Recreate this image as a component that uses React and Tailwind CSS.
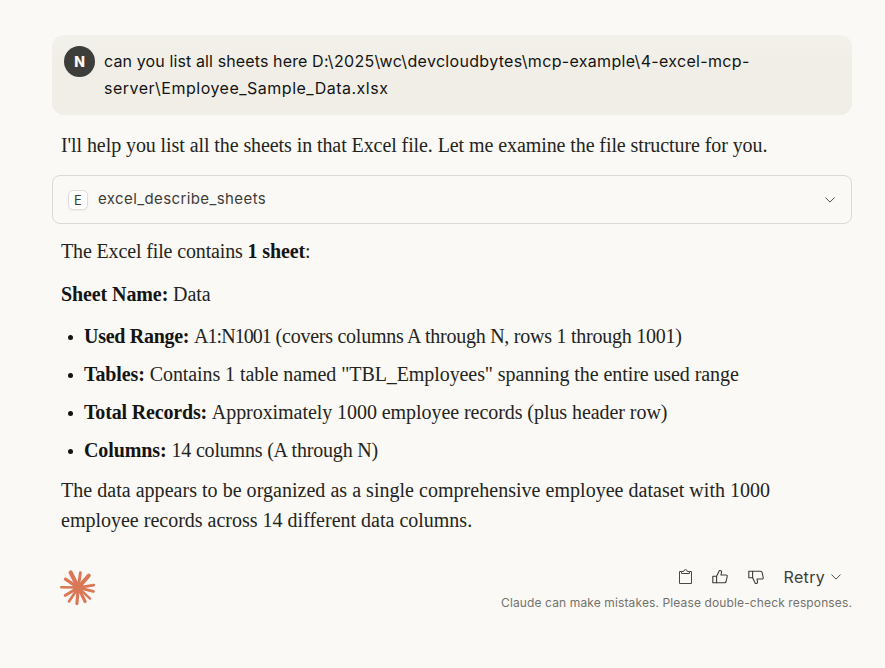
import React from "react";

const rays = [
  [-82, 16.5, 2.9], [-49, 18, 4], [-9, 17, 2.8], [14, 17, 3], [43, 17.3, 2.5],
  [64, 17, 3.1], [95, 17.6, 3.1], [124, 18, 2.7], [149, 16.8, 2.9], [181, 18.3, 2.5],
  [213, 17, 3.3], [243, 19, 4.2],
];

function Starburst() {
  return (
    <svg className="size-[38px]" viewBox="-19.3 -19.6 38 38" stroke="#d97757" strokeLinecap="round">
      {rays.map(([a, r, w]) => (
        <line
          key={a}
          x1="0"
          y1="0"
          x2={(r - w / 2) * Math.cos((a * Math.PI) / 180)}
          y2={(r - w / 2) * Math.sin((a * Math.PI) / 180)}
          strokeWidth={w}
        />
      ))}
      <circle r="5.2" fill="#d97757" stroke="none" />
    </svg>
  );
}

function Chevron() {
  return (
    <svg className="h-[6px] w-[10px] shrink-0" viewBox="0 0 10 6" fill="none" stroke="#4f4e4a" strokeLinecap="round" strokeLinejoin="round">
      <path d="M0.7 0.8 5 5.1 9.3 0.8" />
    </svg>
  );
}

function Clipboard() {
  return (
    <svg className="size-4" viewBox="0 0 16 16" fill="none" stroke="#4a4945" strokeLinejoin="round">
      <path d="M4.5 2.5h-2v12h12v-12h-2" />
      <path d="M4.5 4.5v-2h2.2a1.8 1.8 0 0 1 3.6 0h2.2v2z" />
    </svg>
  );
}

function Thumb({ className }) {
  return (
    <svg className={className} viewBox="0 0 16 16" fill="none" stroke="#3d3d3a" strokeWidth="1.1" strokeLinejoin="round">
      <path d="M.8 7.3h3.8v6.4H.8z" />
      <path d="M4.6 7.3 7.4 1.5c1.6-.3 2.4.8 2.1 2.2L9 6h5c.9 0 1.4.7 1.2 1.5l-1.1 5c-.2.8-.7 1.2-1.4 1.2H4.6" />
    </svg>
  );
}

function Item({ label, labelClass, className, children }) {
  return (
    <li className="flex h-[38px] items-center">
      <span className="mt-[3px] mr-[11px] ml-[7px] size-[5px] rounded-full bg-[#141413]" />
      <p className="whitespace-pre">
        <span className={labelClass}><b className="text-[#141413]">{label}</b> </span>
        <span className={className}>{children}</span>
      </p>
    </li>
  );
}

export default function App() {
  return (
    <main className="h-[668px] w-[885px] overflow-hidden bg-[#faf9f5] pt-[35px] pl-[52px] font-['Liberation_Serif',serif] text-[20px] leading-[30px] text-[#242421]">
      <div className="w-[800px]">
        <section className="flex h-20 gap-[9px] rounded-xl bg-linear-to-b from-[#f3f1eb] to-[#f0eee6] to-40% pt-[11px] pl-3 font-['Inter',sans-serif] text-[16px] leading-[27px] text-[#141413]">
          <div className="flex size-[31px] items-center justify-center rounded-full bg-[#3d3d3a] text-[14px] font-extrabold text-[#faf9f5]">N</div>
          <p className="pt-[2px] whitespace-pre">
            <span className="block tracking-[0.32px]"><span className="tracking-[0.12px]">can you list all sheets here </span>D:\2025\wc\devcloudbytes\mcp-example\4-excel-mcp-</span>
            <span className="block tracking-[0.5px]">server\Employee_Sample_Data.xlsx</span>
          </p>
        </section>

        <p className="mt-[15px] pl-[9px] tracking-[-0.085px] whitespace-pre">I'll help you list all the sheets in that Excel file. Let me examine the file structure for you.</p>

        <section className="mt-[15px] flex h-[49px] items-center rounded-lg border border-[#dad9d4] pr-4 pl-[15px] font-['Inter',sans-serif] text-[15px] text-[#3d3d3a]">
          <span className="flex size-5 items-center justify-center rounded-[5px] border border-[#dfdeda] bg-white pt-[2px] text-[13px] leading-none shadow-xs">E</span>
          <span className="mb-[2px] ml-[10px] flex-1 tracking-[0.4px]">excel_describe_sheets</span>
          <Chevron />
        </section>

        <div className="mt-[12px] pl-[9px]">
          <p className="tracking-[-0.14px]">The Excel file contains <b className="text-[#141413]">1 sheet</b>:</p>
          <p className="mt-[13px] tracking-[-0.1px]"><b className="text-[#141413]">Sheet Name:</b> Data</p>
          <ul className="mt-[8px]">
            <Item label="Used Range:" labelClass="tracking-[-0.28px]" className="tracking-[-0.25px]">
              <span className="tracking-[-0.95px]">A1:N1001</span> (covers columns A through N, rows 1 through 1001)
            </Item>
            <Item label="Tables:" labelClass="tracking-[-0.1px]" className="tracking-[-0.08px]">Contains 1 table named "TBL_Employees" spanning the entire used range</Item>
            <Item label="Total Records:" labelClass="tracking-[-0.17px]" className="tracking-[-0.06px]">Approximately 1000 employee records (plus header row)</Item>
            <Item label="Columns:" labelClass="tracking-[-0.1px]" className="tracking-[-0.19px]">14 columns (A through N)</Item>
          </ul>
          <p className="mt-[6px] whitespace-pre">
            <span className="block tracking-[0.03px]">The data appears to be organized as a single comprehensive employee dataset with 1000</span>
            <span className="block">employee records across 14 different data columns.</span>
          </p>
        </div>

        <footer className="mt-[33px] flex justify-between pl-[7px] font-['Inter',sans-serif]">
          <Starburst />
          <div className="-mt-[3px] flex flex-col items-end">
            <div className="flex h-6 items-center pr-[11px] text-[16px] text-[#3d3d3a]">
              <Clipboard />
              <Thumb className="ml-[19px] size-4" />
              <Thumb className="ml-[20px] size-4 -scale-y-100" />
              <span className="mr-[6px] ml-[20px] tracking-[0.3px]">Retry</span>
              <Chevron />
            </div>
            <p className="mt-[5px] text-[12px] leading-[18px] tracking-[0.125px] text-[#73726c]">Claude can make mistakes. Please double-check responses.</p>
          </div>
        </footer>
      </div>
    </main>
  );
}
